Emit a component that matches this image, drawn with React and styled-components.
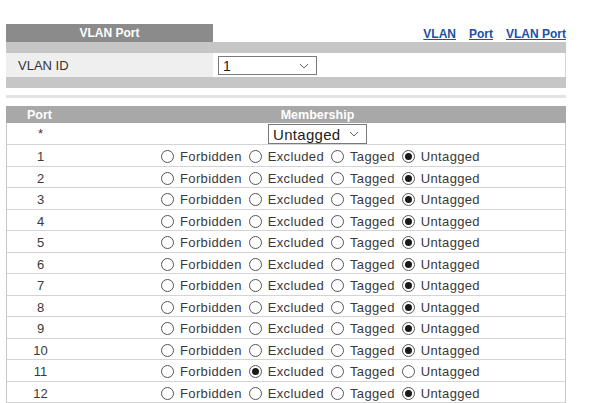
import React, { useState } from "react";
import styled, { createGlobalStyle } from "styled-components";

const GlobalStyle = createGlobalStyle`
  body {
    margin: 0;
    background: #ffffff;
    font-family: "Liberation Sans", Arial, sans-serif;
    color: #333333;
  }
`;

const OPTIONS = ["Forbidden", "Excluded", "Tagged", "Untagged"];

const initialPorts = Array.from({ length: 12 }, (_, i) => ({
  port: i + 1,
  value: i + 1 === 11 ? "Excluded" : "Untagged",
}));

const Chevron = () => (
  <svg width="10" height="6" viewBox="0 0 10 6">
    <path d="M1 1 L5 5 L9 1" fill="none" stroke="#666" strokeWidth="1" />
  </svg>
);

const App = () => {
  const [ports, setPorts] = useState(initialPorts);

  const setPort = (port, value) => {
    setPorts((prev) => prev.map((p) => (p.port === port ? { ...p, value } : p)));
  };

  return (
    <Page>
      <GlobalStyle />
      <TopBar>
        <Tab>VLAN Port</Tab>
        <Links>
          <a href="#vlan">VLAN</a>
          <a href="#port">Port</a>
          <a href="#vlanport">VLAN Port</a>
        </Links>
      </TopBar>
      <Band $h={11} />
      <IdRow>
        <IdLabel>VLAN ID</IdLabel>
        <IdValue>
          <SelectBox $w={99} $h={19} $size={14}>
            <span>1</span>
            <Chevron />
          </SelectBox>
        </IdValue>
      </IdRow>
      <Band $h={13} />
      <Separator />
      <Table>
        <HeadRow>
          <Cell>Port</Cell>
          <Cell>Membership</Cell>
        </HeadRow>
        <StarRow>
          <Cell>*</Cell>
          <Cell>
            <SelectBox $w={99} $h={20} $size={15}>
              <span>Untagged</span>
              <Chevron />
            </SelectBox>
          </Cell>
        </StarRow>
        {ports.map((p) => (
          <Row key={p.port}>
            <Cell>{p.port}</Cell>
            <Cell>
              <RadioGroup>
                {OPTIONS.map((o) => (
                  <RadioLabel key={o}>
                    <Radio
                      type="radio"
                      name={`port-${p.port}`}
                      checked={p.value === o}
                      onChange={() => setPort(p.port, o)}
                    />
                    {o}
                  </RadioLabel>
                ))}
              </RadioGroup>
            </Cell>
          </Row>
        ))}
      </Table>
    </Page>
  );
};

export default App;

const Page = styled.div`
  width: 560px;
  padding: 24px 0 0 6px;
`;

const TopBar = styled.div`
  display: flex;
  justify-content: space-between;
  align-items: flex-end;
  height: 18px;
`;

const Tab = styled.div`
  width: 207px;
  height: 18px;
  line-height: 18px;
  background: #8b8b8b;
  color: #ffffff;
  font-weight: bold;
  font-size: 12px;
  text-align: center;
`;

const Links = styled.div`
  display: flex;
  gap: 13px;
  padding-bottom: 1px;
  a {
    color: #1f4f9f;
    font-weight: bold;
    font-size: 12px;
    text-decoration: underline;
  }
`;

const Band = styled.div`
  height: ${(p) => p.$h}px;
  background: #c6c6c6;
`;

const IdRow = styled.div`
  display: grid;
  grid-template-columns: 207px 1fr;
  height: 22px;
`;

const IdLabel = styled.div`
  background: #efefef;
  padding: 2px 0 0 12px;
  font-size: 13px;
  line-height: 22px;
`;

const IdValue = styled.div`
  background: #ffffff;
  border-right: 1px solid #d6d6d6;
  display: flex;
  align-items: center;
  padding-left: 5px;
`;

const SelectBox = styled.div`
  box-sizing: border-box;
  width: ${(p) => p.$w}px;
  height: ${(p) => p.$h}px;
  border: 1px solid #7a7a7a;
  background: #ffffff;
  display: inline-flex;
  align-items: center;
  justify-content: space-between;
  padding: 1px 7px 0 4px;
  font-size: ${(p) => p.$size}px;
  color: #222222;
  letter-spacing: 0.3px;
`;

const Separator = styled.div`
  margin-top: 7px;
  height: 3px;
  background: #e4e4e4;
`;

const Table = styled.div`
  margin-top: 8px;
  border-left: 1px solid #c8c8c8;
  border-right: 1px solid #c8c8c8;
`;

const Cell = styled.div`
  display: flex;
  align-items: center;
  justify-content: center;
`;

const HeadRow = styled.div`
  display: grid;
  grid-template-columns: 67px 1fr;
  height: 17px;
  background: #a8a8a8;
  color: #ffffff;
  font-weight: bold;
  font-size: 12.5px;
  margin: 0 -1px;
  padding-right: 4px;
`;

const Row = styled.div`
  display: grid;
  grid-template-columns: 67px 1fr;
  box-sizing: border-box;
  height: 21.5px;
  padding-top: 3px;
  border-bottom: 1px solid #d4d4d4;
  font-size: 13px;
  color: #3a3a3a;
`;

const StarRow = styled(Row)`
  height: 22px;
  padding: 0 4px 0 0;
`;

const RadioGroup = styled.div`
  display: flex;
  gap: 7px;
  margin-left: 2px;
`;

const RadioLabel = styled.label`
  display: flex;
  align-items: center;
  gap: 6px;
  letter-spacing: 0.35px;
`;

const Radio = styled.input`
  appearance: none;
  margin: 0;
  width: 13px;
  height: 13px;
  border: 1px solid #555555;
  border-radius: 50%;
  background: #ffffff;
  display: grid;
  place-items: center;
  &:checked::after {
    content: "";
    width: 7px;
    height: 7px;
    border-radius: 50%;
    background: #1a1a1a;
  }
`;
